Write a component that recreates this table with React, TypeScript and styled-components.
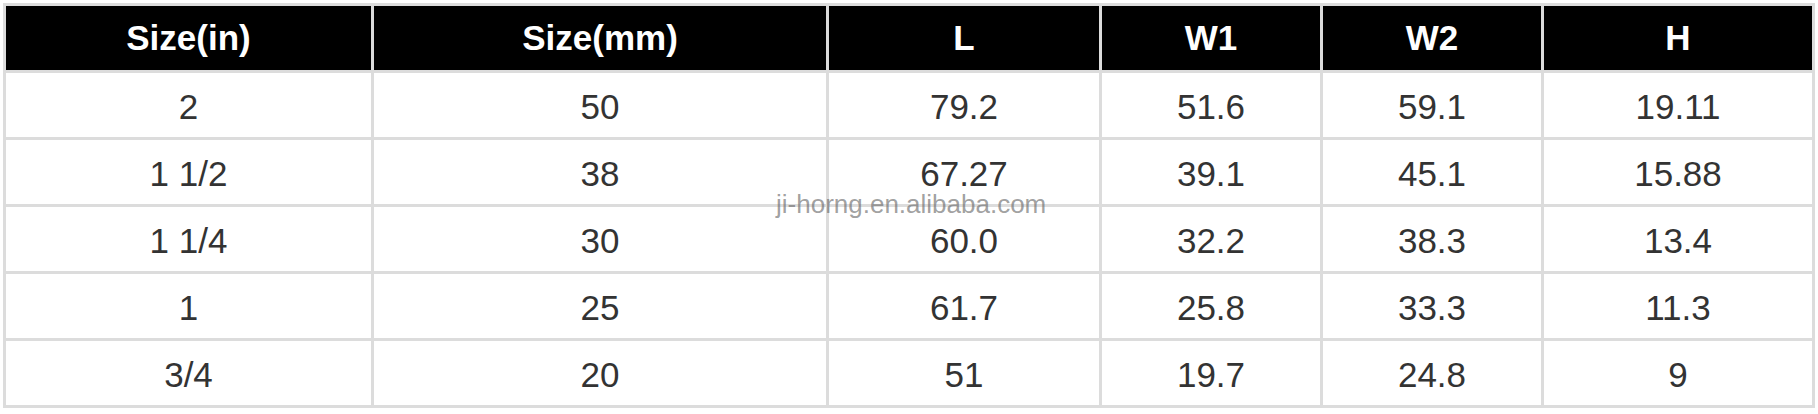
import React from "react";
import styled, { createGlobalStyle } from "styled-components";

const GlobalStyle = createGlobalStyle`
  html, body {
    margin: 0;
    padding: 0;
    background: #fff;
  }
  body {
    font-family: "Liberation Sans", Arial, sans-serif;
  }
`;

const headers = ["Size(in)", "Size(mm)", "L", "W1", "W2", "H"];

const rows = [
  ["2", "50", "79.2", "51.6", "59.1", "19.11"],
  ["1 1/2", "38", "67.27", "39.1", "45.1", "15.88"],
  ["1 1/4", "30", "60.0", "32.2", "38.3", "13.4"],
  ["1", "25", "61.7", "25.8", "33.3", "11.3"],
  ["3/4", "20", "51", "19.7", "24.8", "9"],
];

const Page = styled.div`
  padding: 3px;
  position: relative;
`;

const Grid = styled.div`
  width: 1806px;
  display: grid;
  grid-template-columns: 365px 452px 270px 218px 218px 268px;
  grid-auto-rows: 64px;
  gap: 3px;
  padding: 3px;
  background: #dcdcdc;
`;

const Cell = styled.div<{ head?: boolean }>`
  display: flex;
  align-items: center;
  justify-content: center;
  background: ${(props) => (props.head ? "#000" : "#fff")};
  color: ${(props) => (props.head ? "#fff" : "#333")};
  font-weight: ${(props) => (props.head ? 700 : 400)};
  font-size: 35px;
  padding-top: ${(props) => (props.head ? "0" : "3px")};
  white-space: pre;
`;

const Watermark = styled.span`
  position: absolute;
  left: 776px;
  top: 191px;
  font-size: 26px;
  line-height: 26px;
  color: rgba(100, 100, 100, 0.62);
  pointer-events: none;
`;

const App = () => {
  return (
    <Page>
      <GlobalStyle />
      <Grid>
        {headers.map((h) => (
          <Cell head key={h}>
            {h}
          </Cell>
        ))}
        {rows.map((r, i) =>
          r.map((v, j) => <Cell key={`${i}-${j}`}>{v}</Cell>)
        )}
      </Grid>
      <Watermark>ji-horng.en.alibaba.com</Watermark>
    </Page>
  );
};

export default App;
